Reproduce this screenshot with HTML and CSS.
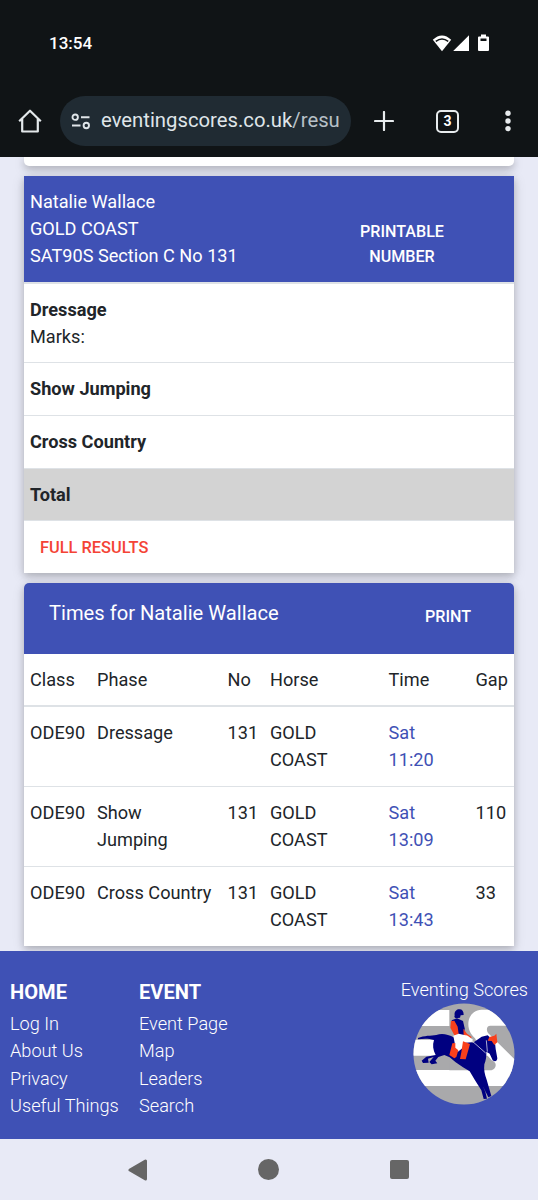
FILE: index.html
```html
<!DOCTYPE html>
<html lang="en">
  <head>
    <meta charset="utf-8">
    <title>Eventing Scores</title>
    <link rel="stylesheet" href="styles.css">
  </head>
  <body>
    <header class="browser">
      <div class="status-bar">
        <span class="clock">13:54</span>
        <svg class="status-icons" width="58" height="18" viewBox="0 0 58 18" fill="#fff">
          <path d="M0.8 5.8Q10 -2.8 19.2 5.8L10 17.3z"/>
          <path d="M3.8 7.3Q10 2.6 16.2 7.3" fill="none" stroke="#101416" stroke-width="1.6"/>
          <path d="M37 1.2V17H21.2z"/>
          <path d="M49 0.5h5v2h2q1 0 1 1V16q0 1-1 1h-9q-1 0-1-1V3.5q0-1 1-1h2z"/>
          <path d="M48.5 4.5h6v2.500h-6z" fill="#101416"/>
        </svg>
      </div>
      <div class="toolbar">
        <svg class="home-icon" width="24" height="24" viewBox="0 0 24 24" fill="none" stroke="#e3e8ea" stroke-width="2.2" stroke-linejoin="round">
          <path d="M1.2 12.300L12 1.700l10.800 10.600M4.200 10v12.500h15.600V10"/>
        </svg>
        <div class="address">
          <svg width="20" height="17" viewBox="0 0 20 17" fill="none" stroke="#dfe5e9" stroke-width="1.9">
            <circle cx="4.200" cy="4.200" r="2.700"/>
            <path d="M10 4.200h8.500M1 12.500h8.500"/>
            <circle cx="15.300" cy="12.500" r="2.700"/>
          </svg>
          <span class="url">eventingscores.co.uk<span class="path">/resu</span></span>
        </div>
        <svg class="new-tab" width="20" height="20" viewBox="0 0 20 20" stroke="#e8ecee" stroke-width="2.2" stroke-linecap="round">
          <path d="M10 1v18M1 10h18"/>
        </svg>
        <span class="tab-count">3</span>
        <svg class="menu-icon" width="6" height="22" viewBox="0 0 6 22" fill="#e8ecee">
          <circle cx="3" cy="3.200" r="2.700"/>
          <circle cx="3" cy="11" r="2.700"/>
          <circle cx="3" cy="18.600" r="2.700"/>
        </svg>
      </div>
    </header>

    <main>
      <div class="card card-end"></div>

      <div class="card">
        <div class="entry-header">
          <div>Natalie Wallace<br>GOLD COAST<br>SAT90S Section C No 131</div>
          <a class="btn printable">Printable Number</a>
        </div>
        <div class="row marks"><b>Dressage</b><br>Marks:</div>
        <div class="row"><b>Show Jumping</b></div>
        <div class="row"><b>Cross Country</b></div>
        <div class="row total"><b>Total</b></div>
        <div class="row results"><a class="btn full-results">Full Results</a></div>
      </div>

      <div class="card rounded">
        <div class="times-header">
          <span>Times for Natalie Wallace</span>
          <a class="btn">Print</a>
        </div>
        <table class="times">
          <colgroup>
            <col class="c-class"><col class="c-phase"><col class="c-no">
            <col class="c-horse"><col class="c-time"><col class="c-gap">
          </colgroup>
          <thead>
            <tr><th>Class</th><th>Phase</th><th>No</th><th>Horse</th><th>Time</th><th>Gap</th></tr>
          </thead>
          <tbody>
            <tr><td>ODE90</td><td>Dressage</td><td>131</td><td>GOLD<br>COAST</td><td><a>Sat<br>11:20</a></td><td></td></tr>
            <tr><td>ODE90</td><td>Show<br>Jumping</td><td>131</td><td>GOLD<br>COAST</td><td><a>Sat<br>13:09</a></td><td>110</td></tr>
            <tr><td>ODE90</td><td>Cross Country</td><td>131</td><td>GOLD<br>COAST</td><td><a>Sat<br>13:43</a></td><td>33</td></tr>
          </tbody>
        </table>
      </div>
    </main>

    <footer class="page-footer">
      <div class="links home-links">
        <h6>HOME</h6>
        <a>Log In</a>
        <a>About Us</a>
        <a>Privacy</a>
        <a>Useful Things</a>
      </div>
      <div class="links">
        <h6>EVENT</h6>
        <a>Event Page</a>
        <a>Map</a>
        <a>Leaders</a>
        <a>Search</a>
      </div>
      <div class="brand">
        <span>Eventing Scores</span>
        <svg width="102" height="102" viewBox="56 84 306 306">
          <clipPath id="disc"><circle cx="209" cy="237" r="151.5"/></clipPath>
          <g clip-path="url(#disc)">
            <path d="M50 80h320v320H50z" fill="#a9a9ab"/>
            <path d="M50 105h115v48H50zM50 194h76v48H50zM50 285h320v48H50z" fill="#fff"/>
            <path d="M370 104H262C236 104 222 126 222 147C222 166 230 178 242 190L270 242V290H370V262L281 174C275 165 277 152 288 152H370z" fill="#fff"/>
            <path d="M165 242H280L292 256C302 260 307 268 303 276C300 283 294 286 286 286H165z" fill="#a9a9ab"/>
          </g>
          <!-- horse -->
          <path d="M71 189C90 181 110 183 126 180C142 174 160 177 180 188L236 203L262 185L280 181L288 188L301 194L304 222L309 250C308 259 302 261 295 256L286 236L276 230C277 246 274 258 270 268C268 284 271 298 277 314L291 363L282 367L258 318L264 330L273 350L278 371L268 372L261 346L242 316L226 289L206 277L184 262L166 247L150 240L132 246L123 257L129 265L112 268L105 261L118 246L101 251L103 263L86 264L82 257L96 245L124 240C116 225 114 210 119 195C102 190 88 191 71 193z" fill="#000080"/>
          <!-- rider -->
          <path d="M181 121C179 111 186 103 195 103C204 103 208 109 208 120L199 121L197 128L184 130L180 126z" fill="#000080"/>
          <path d="M172 136L188 130L206 138L211 160L209 182L190 186L176 158z" fill="#000080"/>
          <path d="M170 138L180 137L190 155L193 178L181 182L168 158zM207 161L218 176L232 186L228 194L208 181z" fill="#f9401c"/>
          <path d="M177 182L193 176L220 182L236 194L231 202L214 203L204 220L190 231L178 222L181 203z" fill="#fff"/>
          <path d="M174 205L183 204L183 218L192 226L186 246L180 250L165 240zM206 199L227 207L221 229L214 253L197 252L201 232z" fill="#f9401c"/>
          <path d="M280 197L285 186L300 182L306 176L309 202L300 210L292 198z" fill="#f9401c"/>
          <path d="M214 181L274 234M276 196L279 230" fill="none" stroke="#fff" stroke-width="2"/>
        </svg>
      </div>
    </footer>

    <nav class="system-nav">
      <svg width="20" height="22" viewBox="0 0 20 22" fill="#666" stroke="#666" stroke-width="3" stroke-linejoin="round"><path d="M2 11L17.500 2v18z"/></svg>
      <span class="nav-home"></span>
      <span class="nav-recent"></span>
    </nav>
  </body>
</html>
```
FILE: styles.css
```css
:root {
  --primary: #3f51b5;
  --page: #e8eaf6;
  --chrome: #101416;
  --text: #212529;
  --border: #dee2e6;
  --danger: #f44336;
}

* {
  margin: 0;
  padding: 0;
  box-sizing: border-box;
}

body {
  width: 538px;
  height: 1200px;
  display: flex;
  flex-direction: column;
  overflow: hidden;
  font-family: Roboto, "Liberation Sans", sans-serif;
  font-size: 18.15px;
  line-height: 27.2px;
  background: var(--page);
  color: var(--text);
}

svg {
  display: block;
  flex-shrink: 0;
}

.browser {
  height: 157px;
  flex-shrink: 0;
  background: var(--chrome);
  color: #fff;
  position: relative;
  z-index: 1;
}

.status-bar {
  display: flex;
  justify-content: space-between;
  align-items: center;
  height: 86px;
  padding: 0 49px 0 49px;
}

.clock {
  padding-top: 2px;
  font-size: 17px;
  font-weight: 500;
}

.status-icons {
  margin-right: -1px;
}

.toolbar {
  display: flex;
  align-items: center;
  height: 70px;
  padding-left: 18px;
}

.address {
  display: flex;
  align-items: center;
  width: 291px;
  height: 50px;
  margin-left: 18px;
  padding-left: 11px;
  border-radius: 25px;
  background: #202b33;
}

.url {
  margin-left: 10px;
  font-size: 20.3px;
  color: #dfe5e9;
  white-space: nowrap;
}

.path {
  color: #b7c0c7;
}

.new-tab {
  margin-left: 23px;
}

.tab-count {
  width: 23px;
  height: 23px;
  margin-left: 42px;
  border: 2px solid #e8ecee;
  border-radius: 5px;
  font-size: 14px;
  font-weight: 700;
  line-height: 19px;
  text-align: center;
}

.menu-icon {
  margin-left: 46px;
}

main {
  height: 794px;
  flex-shrink: 0;
  padding: 0 24px;
}

.card {
  margin-bottom: 10px;
  background: #fff;
  box-shadow: 0 3px 7px rgba(0, 0, 0, 0.18), 0 3px 13px rgba(0, 0, 0, 0.12);
}

.card-end {
  height: 9px;
  border-radius: 0 0 5px 5px;
}

.rounded {
  border-radius: 5px 5px 0 0;
}

.entry-header {
  display: flex;
  justify-content: space-between;
  height: 108px;
  padding: 12px 57px 0 6px;
  background: var(--primary);
  background-clip: padding-box;
  color: #fff;
  border-bottom: 2px solid var(--border);
}

.btn {
  font-size: 16.1px;
  font-weight: 500;
  line-height: 25px;
  text-transform: uppercase;
}

.printable {
  width: 110px;
  padding-top: 31px;
  text-align: center;
}

.row {
  height: 52.7px;
  padding: 12px 6px;
  border-bottom: 1px solid var(--border);
}

.marks {
  height: 79.2px;
}

.total {
  background: #d3d3d3;
}

.results {
  height: 52px;
  padding-left: 16px;
  border-bottom: 0;
}

.full-results {
  color: var(--danger);
  font-size: 16.4px;
}

.times-header {
  display: flex;
  justify-content: space-between;
  height: 71px;
  padding: 17px 43px 0 25px;
  border-radius: 5px 5px 0 0;
  background: var(--primary);
  color: #fff;
  font-size: 20.15px;
}

.times-header .btn {
  padding-top: 4px;
}

.times {
  width: 490px;
  table-layout: fixed;
  border-collapse: separate;
  border-spacing: 0;
}

.c-class { width: 67px; }
.c-phase { width: 130.5px; }
.c-no { width: 42.5px; }
.c-horse { width: 118.5px; }
.c-time { width: 87px; }
.c-gap { width: 44.5px; }

th,
td {
  padding: 12px 0 0 6px;
  font-weight: 400;
  text-align: left;
  vertical-align: top;
  white-space: nowrap;
}

th {
  height: 53px;
  border-bottom: 2px solid var(--border);
}

td {
  height: 80px;
  border-bottom: 1px solid var(--border);
}

tr:last-child td {
  height: 79px;
  border-bottom: 0;
}

td a {
  color: var(--primary);
}

.page-footer {
  display: flex;
  height: 188px;
  flex-shrink: 0;
  padding: 28px 10px 0;
  background: var(--primary);
  color: #fff;
  font-weight: 300;
  position: relative;
}

.links {
  display: flex;
  flex-direction: column;
}

.home-links {
  width: 129px;
}

.links h6 {
  margin-bottom: 4px;
  font-size: 20.1px;
  font-weight: 700;
}

.brand {
  display: flex;
  flex-direction: column;
  align-items: center;
  margin-left: auto;
  margin-top: -3px;
}

.system-nav {
  display: flex;
  align-items: center;
  height: 61px;
  padding-left: 128px;
}

.nav-home {
  width: 21px;
  height: 21px;
  margin-left: 110px;
  border-radius: 50%;
  background: #666;
}

.nav-recent {
  width: 19px;
  height: 19px;
  margin-left: 111px;
  border-radius: 2px;
  background: #666;
}
```
